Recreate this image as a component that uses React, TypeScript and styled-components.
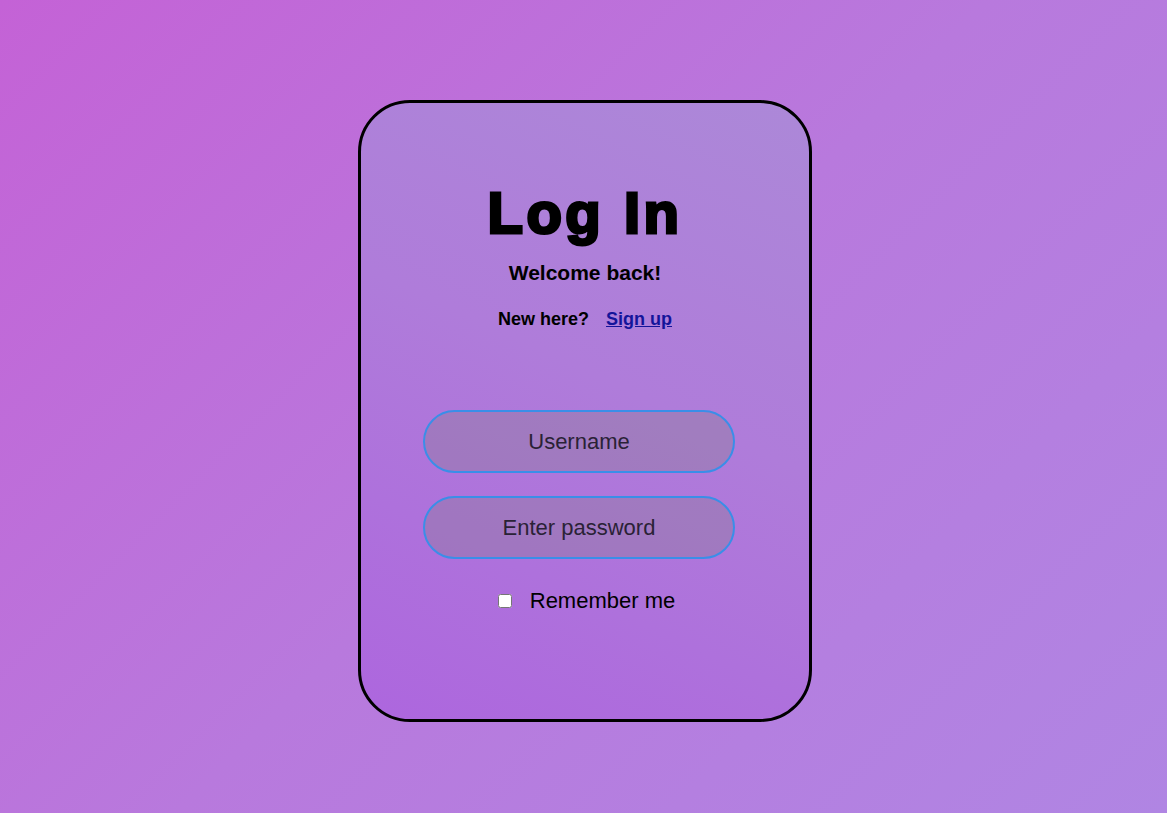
import React from "react";
import styled, { createGlobalStyle } from "styled-components";

const GlobalStyle = createGlobalStyle`
  html, body {
    margin: 0;
    padding: 0;
    height: 100%;
  }
  body {
    font-family: "Liberation Sans", Arial, sans-serif;
    background: linear-gradient(135deg, #c462d6 0%, #b879dd 50%, #b085e3 100%);
    background-attachment: fixed;
    min-height: 813px;
  }
`;

const Page = styled.main`
  display: flex;
  justify-content: center;
  padding-top: 100px;
  min-height: 813px;
  box-sizing: border-box;
`;

const Card = styled.section`
  box-sizing: border-box;
  width: 454px;
  height: 622px;
  border: 3px solid #000;
  border-radius: 52px;
  background: linear-gradient(205deg, #ac88d8 0%, #af7cda 45%, #ad66de 100%);
  display: flex;
  flex-direction: column;
  align-items: center;
  padding-top: 74px;
  margin-left: 3px;
`;

const Title = styled.h1`
  margin: 0;
  font-family: "Liberation Sans", Arial, sans-serif;
  font-size: 58px;
  line-height: 72px;
  font-weight: 700;
  color: #000;
  letter-spacing: 3.5px;
  -webkit-text-stroke: 3px #000;
  paint-order: stroke fill;
`;

const Subtitle = styled.h2`
  margin: 12px 0 0;
  font-size: 21px;
  line-height: 24px;
  font-weight: 700;
  color: #000;
`;

const SignupRow = styled.p`
  margin: 24px 0 0;
  font-size: 18px;
  line-height: 20px;
  font-weight: 700;
  color: #000;
  display: flex;
  gap: 17px;
`;

const SignupLink = styled.a`
  color: #14149a;
  text-decoration: underline;
`;

const Form = styled.form`
  margin-top: 81px;
  display: flex;
  flex-direction: column;
  align-items: center;
  gap: 23px;
`;

const Field = styled.input`
  box-sizing: border-box;
  width: 312px;
  height: 63px;
  margin-right: 12px;
  border: 2px solid #3a8ee8;
  border-radius: 32px;
  background: rgba(128, 128, 128, 0.3);
  font-family: "Liberation Sans", Arial, sans-serif;
  font-size: 22px;
  text-align: center;
  color: #1e1a28;
  outline: none;
  &::placeholder {
    color: #2a2236;
    opacity: 1;
  }
`;

const RememberRow = styled.label`
  display: flex;
  align-items: center;
  gap: 15px;
  margin-top: 6px;
  font-size: 22px;
  line-height: 26px;
  color: #000;
`;

const Check = styled.input`
  width: 14px;
  height: 14px;
  margin: 3px 3px 3px 3px;
`;

export default function App() {
  return (
    <>
      <GlobalStyle />
      <Page>
        <Card>
          <Title>Log In</Title>
          <Subtitle>Welcome back!</Subtitle>
          <SignupRow>
            <span>New here?</span>
            <SignupLink href="#">Sign up</SignupLink>
          </SignupRow>
          <Form onSubmit={(e) => e.preventDefault()}>
            <Field type="text" placeholder="Username" />
            <Field type="password" placeholder="Enter password" />
            <RememberRow>
              <Check type="checkbox" />
              Remember me
            </RememberRow>
          </Form>
        </Card>
      </Page>
    </>
  );
}
